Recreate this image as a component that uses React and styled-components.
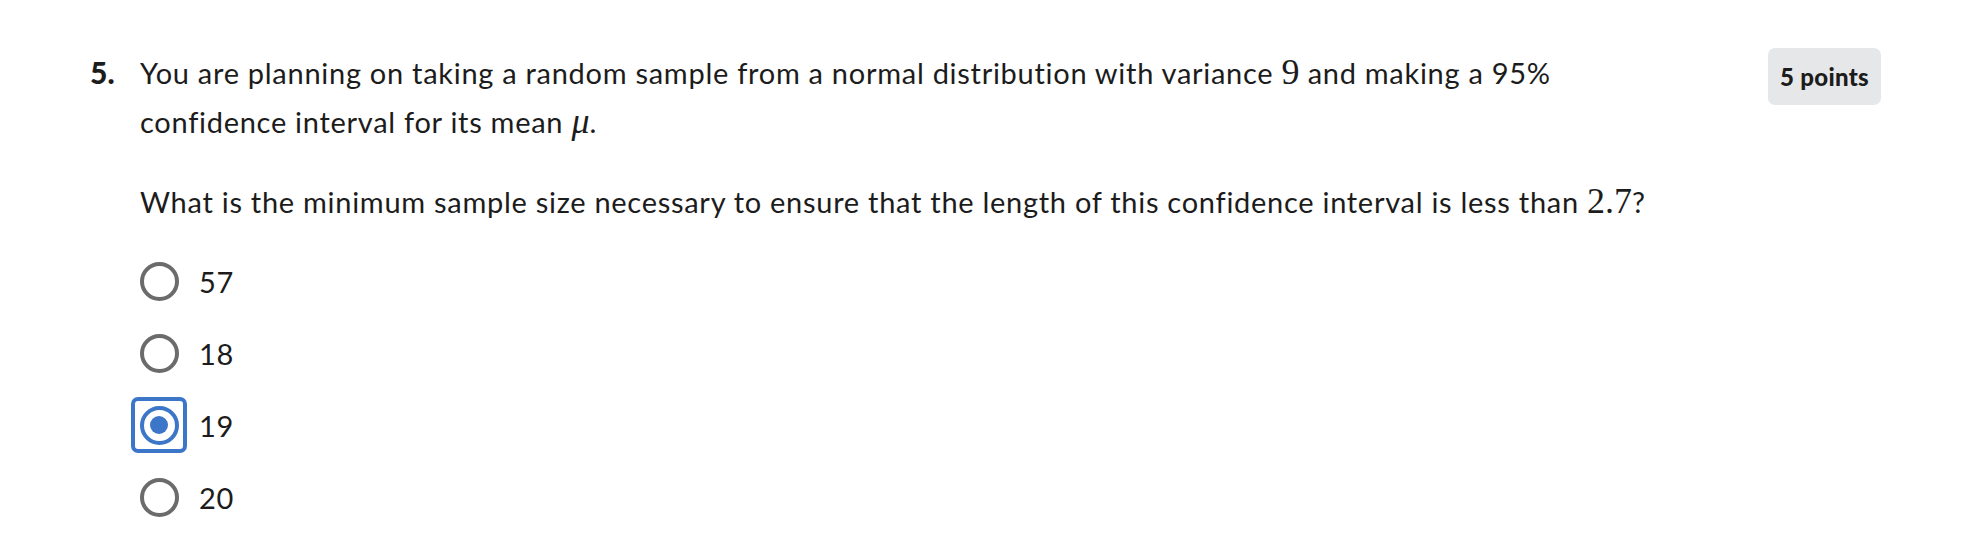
import React from 'react';
import styled, { createGlobalStyle } from 'styled-components';

const GlobalStyle = createGlobalStyle`
  body {
    margin: 0;
    background: #ffffff;
    font-family: Lato, "Open Sans", sans-serif;
    color: #1c1c1c;
  }
`;

const Page = styled.div`
  padding: 48px 101px 0 90px;
`;

const QuestionRow = styled.div`
  display: flex;
  align-items: flex-start;
`;

const Number = styled.div`
  width: 50px;
  flex-shrink: 0;
  font-size: 30px;
  line-height: 48px;
  font-weight: 900;
`;

const Body = styled.div`
  flex: 1;
`;

const Prompt = styled.p`
  margin: 0 0 ${(p) => p.$gap || 0}px 0;
  font-size: 29px;
  line-height: 48px;
  letter-spacing: 0.72px;
`;

const Math = styled.span`
  font-family: "Liberation Serif", "DejaVu Serif", serif;
  font-size: 36px;
  font-style: ${(p) => (p.$italic ? 'italic' : 'normal')};
  letter-spacing: 0;
`;

const Badge = styled.div`
  flex-shrink: 0;
  margin-left: 24px;
  height: 57px;
  padding: 0 12px;
  display: flex;
  align-items: center;
  background: #e6e7e9;
  border-radius: 7px;
  font-size: 24px;
  font-weight: 900;
  letter-spacing: 0.3px;
  color: #1c1c1c;
`;

const Options = styled.div`
  margin-top: 19px;
  display: flex;
  flex-direction: column;
`;

const Option = styled.label`
  display: flex;
  align-items: center;
  height: 72px;
  font-size: 29px;
  letter-spacing: 0.6px;
  cursor: pointer;
`;

const RadioSlot = styled.span`
  width: 40px;
  margin-left: -1px;
  margin-right: 20px;
  display: flex;
  align-items: center;
  justify-content: center;
`;

const Focus = styled.span`
  flex-shrink: 0;
  width: 56px;
  height: 56px;
  box-sizing: border-box;
  border: 4px solid #3b76c8;
  border-radius: 7px;
  display: flex;
  align-items: center;
  justify-content: center;
`;

const Circle = styled.span`
  flex-shrink: 0;
  width: 39px;
  height: 39px;
  box-sizing: border-box;
  border-radius: 50%;
  border: 4px solid ${(p) => (p.$checked ? '#3b76c8' : '#6b6b6b')};
  display: flex;
  align-items: center;
  justify-content: center;

  &::after {
    content: '';
    display: ${(p) => (p.$checked ? 'block' : 'none')};
    width: 18px;
    height: 18px;
    border-radius: 50%;
    background: #3b76c8;
  }
`;

const choices = [
  { label: '57', checked: false },
  { label: '18', checked: false },
  { label: '19', checked: true },
  { label: '20', checked: false },
];

const App = () => {
  return (
    <>
      <GlobalStyle />
      <Page>
        <QuestionRow>
          <Number>5.</Number>
          <Body>
            <Prompt $gap={31}>
              You are planning on taking a random sample from a normal distribution with variance <Math>9</Math> and making a 95%
              <br />
              confidence interval for its mean <Math $italic>μ</Math>.
            </Prompt>
            <Prompt>
              What is the minimum sample size necessary to ensure that the length of this confidence interval is less than <Math>2.7</Math>?
            </Prompt>
            <Options>
              {choices.map((c) => (
                <Option key={c.label}>
                  <RadioSlot>
                    {c.checked ? (
                      <Focus>
                        <Circle $checked />
                      </Focus>
                    ) : (
                      <Circle />
                    )}
                  </RadioSlot>
                  {c.label}
                </Option>
              ))}
            </Options>
          </Body>
          <Badge>5 points</Badge>
        </QuestionRow>
      </Page>
    </>
  );
};

export default App;
